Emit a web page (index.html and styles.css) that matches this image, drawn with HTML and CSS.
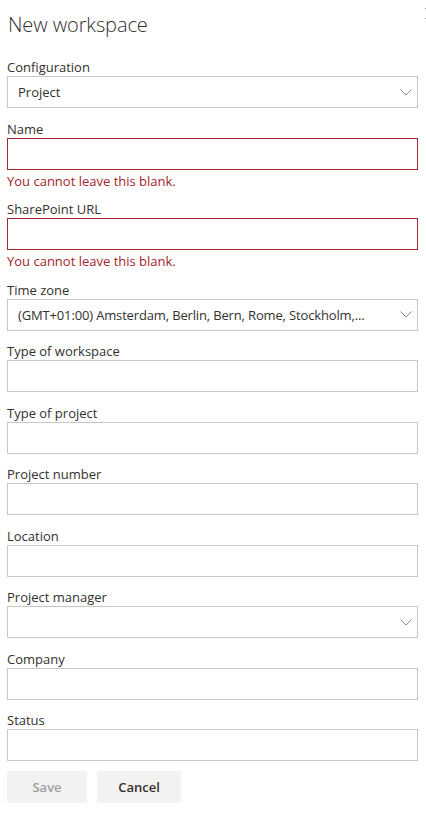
FILE: index.html
```html
<!DOCTYPE html>
<html lang="en">
<head>
<meta charset="utf-8">
<title>New workspace</title>
<link rel="stylesheet" href="styles.css">
</head>
<body>
<div class="panel">
  <svg class="close" width="13" height="13" viewBox="0 0 13 13"><path d="M1 1 L12 12 M12 1 L1 12" stroke="#888" stroke-width="1" fill="none"/></svg>
  <h1 class="title">New workspace</h1>

  <div class="field">
    <div class="label">Configuration</div>
    <div class="box select"><span class="value">Project</span><svg class="chev" width="12" height="7" viewBox="0 0 12 7"><path d="M0.5 0.5 L6 6 L11.5 0.5" stroke="#8a8886" stroke-width="1" fill="none"/></svg></div>
  </div>

  <div class="field">
    <div class="label">Name</div>
    <div class="box invalid"></div>
    <div class="error-msg">You cannot leave this blank.</div>
  </div>

  <div class="field">
    <div class="label">SharePoint URL</div>
    <div class="box invalid"></div>
    <div class="error-msg">You cannot leave this blank.</div>
  </div>

  <div class="field">
    <div class="label">Time zone</div>
    <div class="box select"><span class="value tight">(GMT+01:00) Amsterdam, Berlin, Bern, Rome, Stockholm,...</span><svg class="chev" width="12" height="7" viewBox="0 0 12 7"><path d="M0.5 0.5 L6 6 L11.5 0.5" stroke="#8a8886" stroke-width="1" fill="none"/></svg></div>
  </div>

  <div class="field">
    <div class="label">Type of workspace</div>
    <div class="box"></div>
  </div>

  <div class="field">
    <div class="label">Type of project</div>
    <div class="box"></div>
  </div>

  <div class="field">
    <div class="label">Project number</div>
    <div class="box"></div>
  </div>

  <div class="field">
    <div class="label">Location</div>
    <div class="box"></div>
  </div>

  <div class="field">
    <div class="label">Project manager</div>
    <div class="box select"><span class="value"></span><svg class="chev" width="12" height="7" viewBox="0 0 12 7"><path d="M0.5 0.5 L6 6 L11.5 0.5" stroke="#8a8886" stroke-width="1" fill="none"/></svg></div>
  </div>

  <div class="field">
    <div class="label">Company</div>
    <div class="box"></div>
  </div>

  <div class="field">
    <div class="label">Status</div>
    <div class="box"></div>
  </div>

  <div class="actions">
    <button class="btn btn-disabled">Save</button>
    <button class="btn btn-default">Cancel</button>
  </div>
</div>
</body>
</html>
```

FILE: styles.css
```css
html, body {
  margin: 0;
  padding: 0;
  background: #ffffff;
  overflow: hidden;
}

body {
  font-family: "Open Sans", "Noto Sans", "Liberation Sans", sans-serif;
  color: #323130;
}

.panel {
  position: relative;
  width: 411px;
  padding: 0 8px 0 7px;
}

.close {
  position: absolute;
  left: 424px;
  top: 7px;
}

.title {
  margin: 0 0 17px 1px;
  padding-top: 11px;
  font-size: 20px;
  line-height: 28px;
  font-weight: 300;
  color: #323130;
  letter-spacing: -0.1px;
}

.field {
  margin-bottom: 9.5px;
}

.label {
  box-sizing: border-box;
  height: 20px;
  padding-top: 2px;
  font-size: 13px;
  line-height: 18px;
  color: #323130;
}

.box {
  box-sizing: border-box;
  height: 32px;
  border: 1px solid #c8c6c4;
  background: #ffffff;
}

.box.invalid {
  border-color: #a4262c;
}

.select {
  display: flex;
  align-items: center;
  padding: 0 5px 0 10px;
  gap: 8px;
}

.value {
  flex: 1;
  min-width: 0;
  font-size: 13px;
  color: #323130;
  white-space: nowrap;
}

.value.tight {
  letter-spacing: -0.15px;
}

.chev {
  flex: none;
}

.error-msg {
  padding-top: 3px;
  line-height: 16px;
  font-size: 13px;
  color: #a4262c;
}

.actions {
  display: flex;
  gap: 10px;
  margin-top: 2.5px;
}

.btn {
  height: 32px;
  border: none;
  background: #f3f2f1;
  font-family: inherit;
  font-size: 13px;
  font-weight: 600;
  padding: 0;
}

.btn-disabled {
  width: 80px;
  color: #a19f9d;
}

.btn-default {
  width: 84px;
  color: #323130;
}
```
